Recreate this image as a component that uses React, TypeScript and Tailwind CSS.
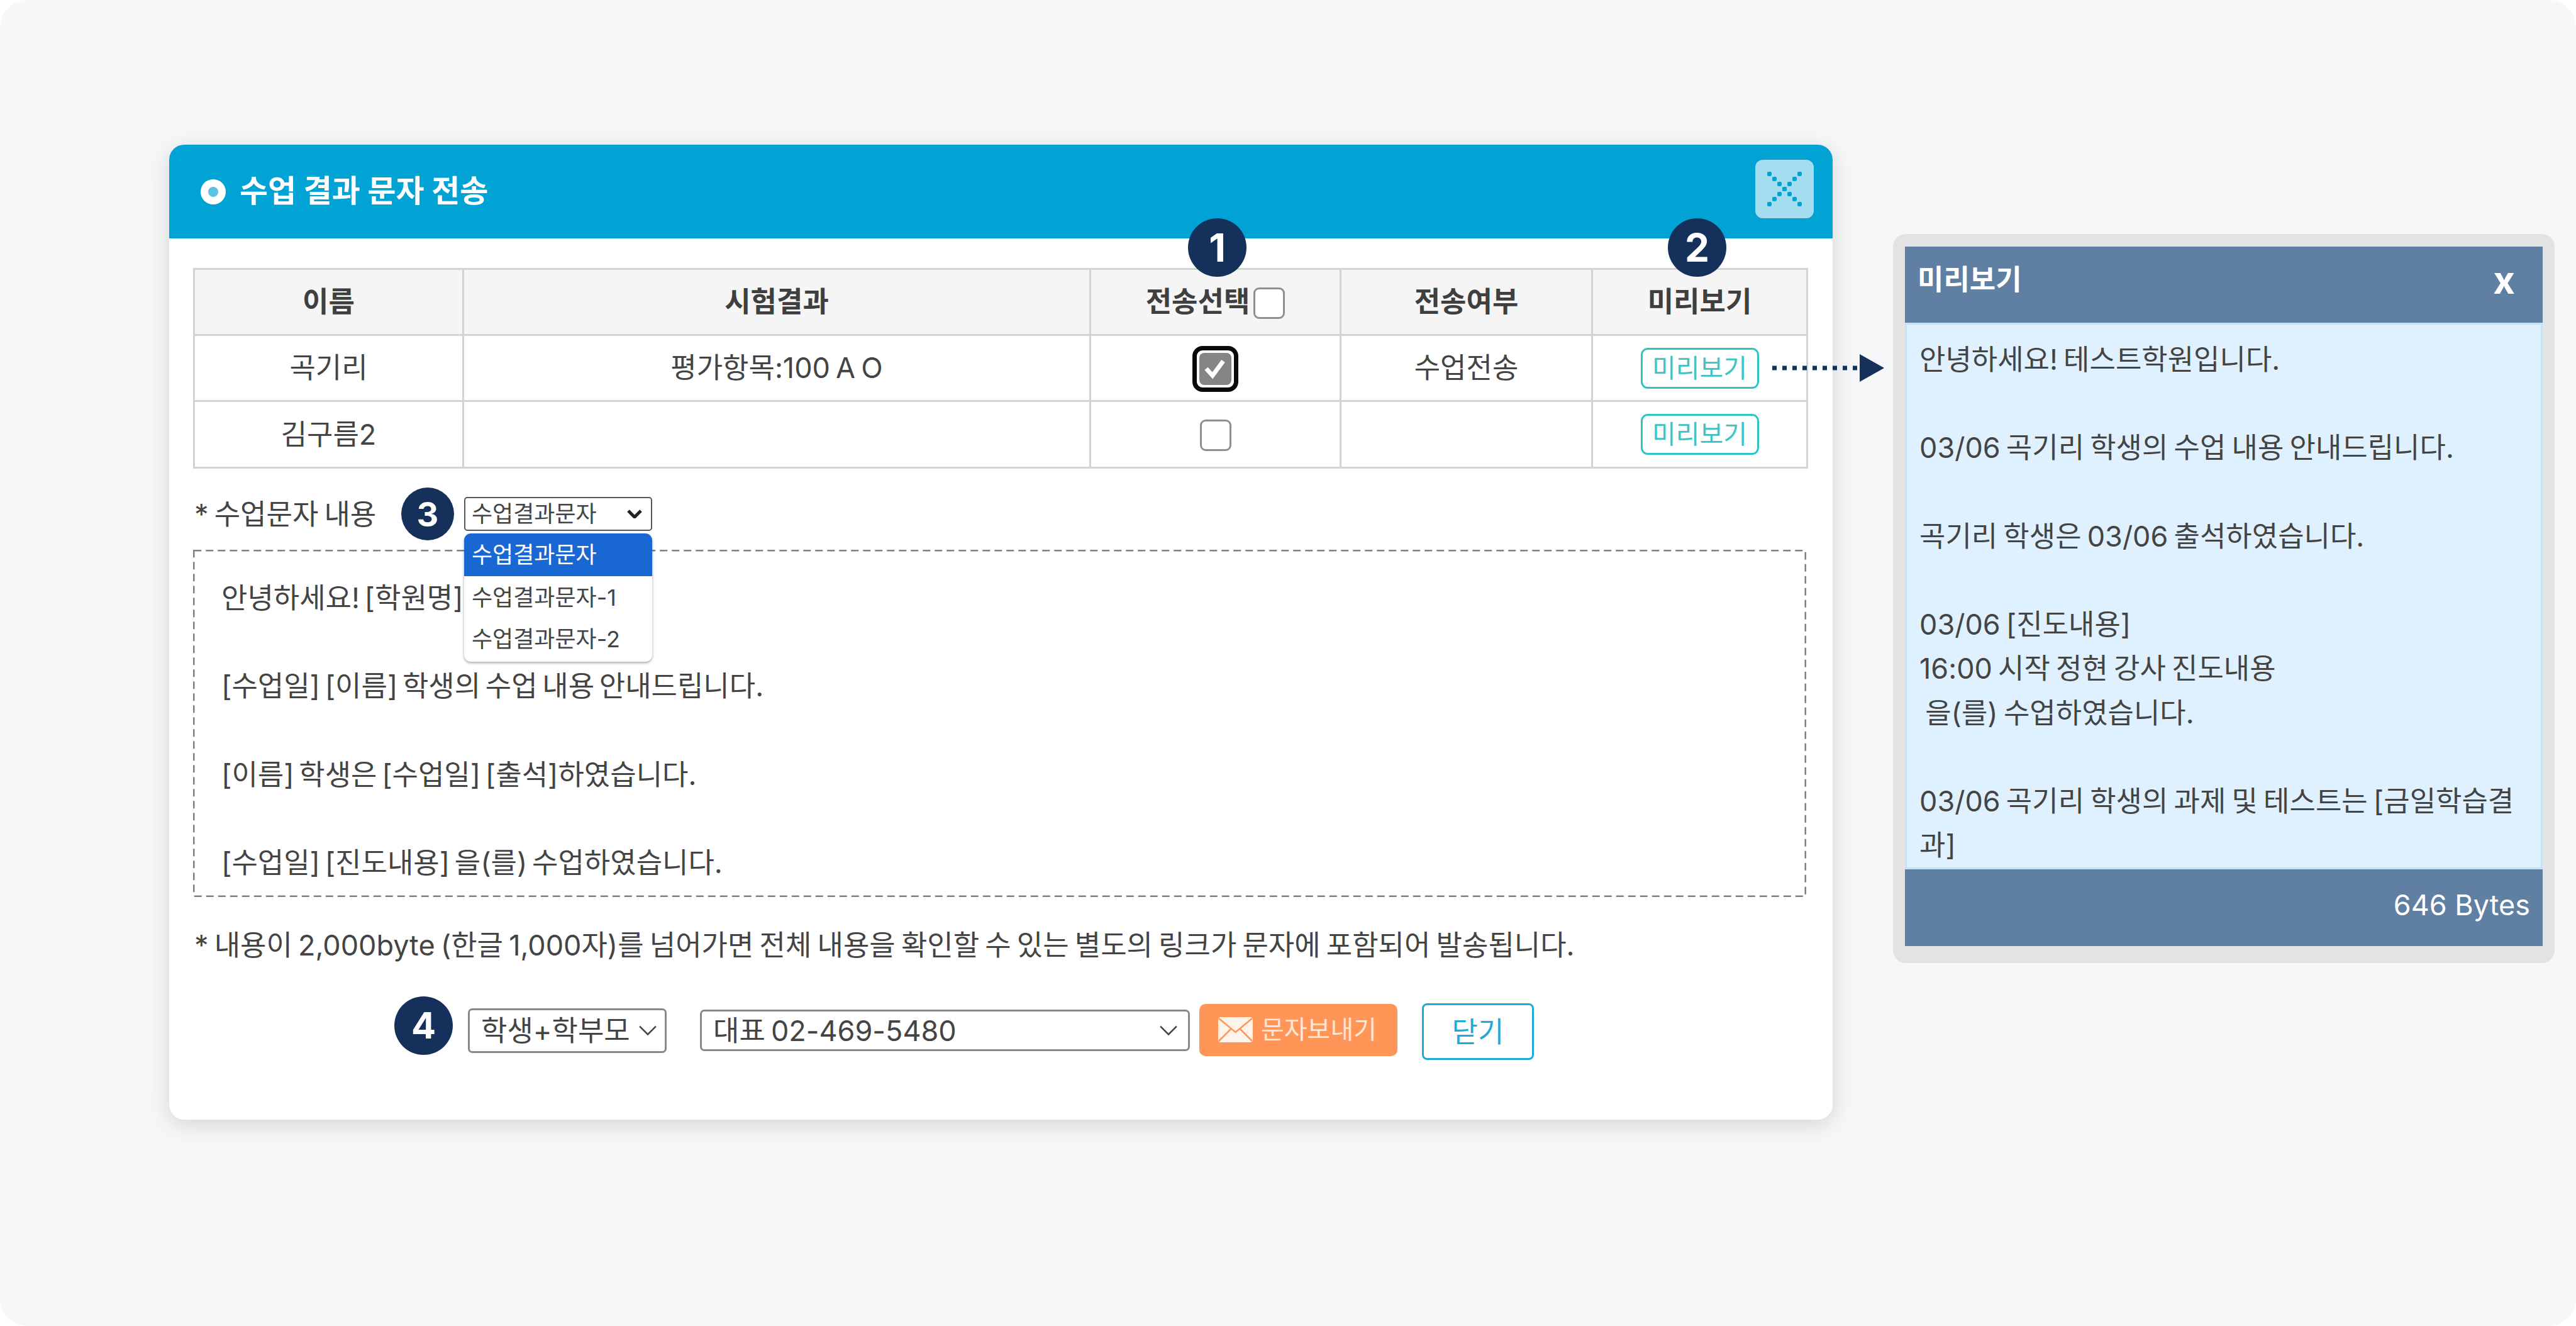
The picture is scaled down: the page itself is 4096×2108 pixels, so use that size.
import React from "react";

const FONT = "[font-family:Inter,'Noto_Sans_CJK_KR','Noto_Sans',sans-serif] [word-spacing:-3.5px]";

function Badge({ n, className = "" }: { n: string; className?: string }) {
  return (
    <div className={`flex items-center justify-center rounded-full bg-[#15305a] text-white font-bold shrink-0 ${className}`}>
      {n}
    </div>
  );
}

function Chevron({ className = "", sw = 2 }: { className?: string; sw?: number }) {
  return (
    <svg viewBox="0 0 24 14" className={className} fill="none" stroke="currentColor" strokeWidth={sw}>
      <path d="M2 2 L12 12 L22 2" />
    </svg>
  );
}

function CloseDotted() {
  const pts = [-3, -2, -1, 0, 1, 2, 3];
  return (
    <svg viewBox="0 0 93 93" className="w-[93px] h-[93px]">
      {pts.map((p) => (
        <g key={p} fill="#00a3d4">
          <rect x={46.5 + p * 8 - 3.5} y={46.5 + p * 8 - 3.5} width="7" height="7" rx="2" />
          <rect x={46.5 - p * 8 - 3.5} y={46.5 + p * 8 - 3.5} width="7" height="7" rx="2" />
        </g>
      ))}
    </svg>
  );
}

function PreviewBtn() {
  return (
    <div className="mx-auto flex items-center justify-center w-[188px] h-[65px] rounded-[11px] border-[3px] border-[#2cc5c5] bg-white text-[#3fc4c4] text-[41px] leading-none">
      미리보기
    </div>
  );
}

function UncheckedBox({ className = "" }: { className?: string }) {
  return <div className={`w-[50px] h-[50px] rounded-[9px] border-[3px] border-[#8f8f8f] bg-white ${className}`} />;
}

function CheckedBox() {
  return (
    <div className="mx-auto mt-[3px] flex items-center justify-center w-[73px] h-[73px] rounded-[16px] border-[7px] border-[#0a0a0a] bg-white">
      <div className="flex items-center justify-center w-[51px] h-[51px] rounded-[8px] bg-[#858585]">
        <svg viewBox="0 0 51 51" className="w-[51px] h-[51px]" fill="none" stroke="#fff" strokeWidth="7">
          <path d="M11 25 L21 36 L38 13" />
        </svg>
      </div>
    </div>
  );
}

const th = "border-[3px] border-[#d3d3d3] bg-[#f5f5f5] font-bold text-[#3f3f3f] text-[45px] text-center p-0";
const td = "border-[3px] border-[#d3d3d3] text-[#444] text-[45px] text-center p-0";

const templateLines = [
  "안녕하세요! [학원명]입니다.",
  "",
  "[수업일] [이름] 학생의 수업 내용 안내드립니다.",
  "",
  "[이름] 학생은 [수업일] [출석]하였습니다.",
  "",
  "[수업일] [진도내용] 을(를) 수업하였습니다.",
];

const previewLines = [
  "안녕하세요! 테스트학원입니다.",
  "",
  "03/06 곡기리 학생의 수업 내용 안내드립니다.",
  "",
  "곡기리 학생은 03/06 출석하였습니다.",
  "",
  "03/06 [진도내용]",
  "16:00 시작 정현 강사 진도내용",
  " 을(를) 수업하였습니다.",
  "",
  "03/06 곡기리 학생의 과제 및 테스트는 [금일학습결과]",
];

export default function App() {
  return (
    <div className={`relative w-[4096px] h-[2108px] bg-white overflow-hidden ${FONT}`}>
      <div className="flex items-start w-full h-full pl-[269px] pt-[230px] gap-[96px] rounded-[44px] bg-[#f6f7f9]">
        {/* Modal */}
        <div className="relative w-[2645px] h-[1550px] shrink-0 rounded-[24px] bg-white shadow-[0_8px_36px_rgba(0,0,0,0.14)]">
          <div className="flex items-center justify-between h-[149px] rounded-t-[24px] bg-[#00a3d4] pl-[50px] pr-[30px]">
            <div className="flex items-center gap-[22px]">
              <div className="flex items-center justify-center w-[40px] h-[40px] rounded-full bg-white">
                <div className="w-[16px] h-[16px] rounded-full bg-[#5cc2e2]" />
              </div>
              <span className="text-white font-bold text-[49px] leading-none -mt-[3px] [word-spacing:0px]">수업 결과 문자 전송</span>
            </div>
            <div className="flex items-center justify-center w-[93px] h-[93px] -mt-[9px] rounded-[12px] bg-[#a6dcef]">
              <CloseDotted />
            </div>
          </div>

          <div className="pl-[38px] pr-[40px] pt-[47px]">
            <table className="table-fixed border-collapse w-[2565px] h-[316px]">
              <colgroup>
                <col className="w-[428px]" />
                <col className="w-[997px]" />
                <col className="w-[398px]" />
                <col className="w-[400px]" />
                <col className="w-[342px]" />
              </colgroup>
              <thead>
                <tr className="h-[105px]">
                  <th className={th}>이름</th>
                  <th className={th}>시험결과</th>
                  <th className={th}>
                    <div className="flex items-center justify-center gap-[6px]">
                      <span>전송선택</span>
                      <UncheckedBox className="mt-[4px]" />
                    </div>
                  </th>
                  <th className={th}>전송여부</th>
                  <th className={th}>미리보기</th>
                </tr>
              </thead>
              <tbody>
                <tr className="h-[105px]">
                  <td className={td}>곡기리</td>
                  <td className={td}>평가항목:100 A O</td>
                  <td className={td}><CheckedBox /></td>
                  <td className={td}>수업전송</td>
                  <td className={td}><PreviewBtn /></td>
                </tr>
                <tr className="h-[106px]">
                  <td className={td}>김구름2</td>
                  <td className={td} />
                  <td className={td}><UncheckedBox className="mx-auto mt-[3px]" /></td>
                  <td className={td} />
                  <td className={td}><PreviewBtn /></td>
                </tr>
              </tbody>
            </table>

            {/* Template row */}
            <div className="flex items-center h-[54px] mt-[45px]">
              <span className="text-[#444] text-[45px] leading-none w-[331px] shrink-0 pl-[2px]">* 수업문자 내용</span>
              <Badge n="3" className="w-[84px] h-[84px] text-[54px]" />
              <div className="relative ml-[16px]">
                <div className="flex items-center justify-between w-[299px] h-[54px] rounded-[5px] border-[2px] border-[#555] bg-white pl-[10px] pr-[14px] text-[#444] text-[36px] leading-none">
                  <span>수업결과문자</span>
                  <Chevron className="w-[24px] h-[14px] text-[#222]" sw={5} />
                </div>
                <div className="absolute left-0 top-[58px] z-10 w-[299px] h-[204px] overflow-hidden rounded-[11px] bg-white shadow-[0_2px_4px_rgba(0,0,0,0.35)] text-[36px] leading-none">
                  <div className="flex items-center h-[68px] pl-[12px] bg-[#1967d2] text-white">수업결과문자</div>
                  <div className="flex items-center h-[68px] pl-[12px] text-[#444]">수업결과문자-1</div>
                  <div className="flex items-center h-[64px] pl-[12px] text-[#444]">수업결과문자-2</div>
                </div>
              </div>
            </div>

            {/* Template text */}
            <div className="relative mt-[30px] h-[552px] w-[2565px] pl-[45px] pr-[40px] pt-[42px] overflow-hidden text-[#444] text-[45px] leading-[70.2px] [word-spacing:-5px]">
              <svg className="absolute inset-0 w-full h-full" fill="none">
                <rect x="1.25" y="1.25" width="2562.5" height="549.5" stroke="#808080" strokeWidth="2.5" strokeDasharray="12 7" />
              </svg>
              {templateLines.map((l, i) => (
                <div key={i} className="relative h-[70.2px]">{l}</div>
              ))}
            </div>

            <p className="mt-[52px] pl-[2px] text-[#444] text-[45px] leading-[50px] whitespace-nowrap">
              * 내용이 2,000byte (한글 1,000자)를 넘어가면 전체 내용을 확인할 수 있는 별도의 링크가 문자에 포함되어 발송됩니다.
            </p>

            {/* Bottom controls */}
            <div className="flex items-center h-[90px] mt-[67px] pl-[320px]">
              <Badge n="4" className="w-[93px] h-[93px] text-[58px] -mt-[20px]" />
              <div className="flex items-center justify-between w-[316px] h-[71px] ml-[24px] rounded-[7px] border-[3px] border-[#888] bg-white pl-[18px] pr-[10px] text-[#444] text-[45px] leading-none -mt-[4px]">
                <span>학생+학부모</span>
                <Chevron className="w-[34px] h-[18px] text-[#444]" />
              </div>
              <div className="flex items-center justify-between w-[779px] h-[66px] ml-[53px] rounded-[7px] border-[3px] border-[#888] bg-white pl-[18px] pr-[14px] text-[#444] text-[45px] leading-none -mt-[4px]">
                <span>대표 02-469-5480</span>
                <Chevron className="w-[34px] h-[18px] text-[#444]" />
              </div>
              <div className="flex items-center w-[315px] h-[83px] ml-[15px] pl-[30px] rounded-[10px] bg-[#ff9557] text-[#ffe7d8] text-[40px] leading-none gap-[13px] -mt-[6px]">
                <svg viewBox="0 0 55 40" className="w-[55px] h-[40px] shrink-0">
                  <rect x="0" y="0" width="55" height="40" rx="4" fill="#fff4ec" />
                  <path d="M1 2 L27.5 24 L54 2 M1 38 L20 19 M54 38 L35 19" fill="none" stroke="#ff9557" strokeWidth="2.5" />
                </svg>
                <span>문자보내기</span>
              </div>
              <div className="flex items-center justify-center w-[178px] h-[90px] ml-[39px] rounded-[8px] border-[3px] border-[#1fabd8] bg-white text-[#1fabd8] text-[45px] leading-none">
                닫기
              </div>
            </div>
          </div>

          <Badge n="1" className="absolute left-[1620px] top-[117px] w-[93px] h-[93px] text-[62px]" />
          <Badge n="2" className="absolute left-[2383px] top-[117px] w-[93px] h-[93px] text-[62px]" />
        </div>

        {/* Preview panel */}
        <div className="w-[1052px] h-[1159px] mt-[142px] shrink-0 rounded-[20px] bg-[#e3e3e3] pt-[20px] px-[19px]">
          <div className="flex items-center justify-between h-[121px] bg-[#5f7fa3] pl-[20px] pr-[44px] text-white font-bold pb-[16px]">
            <span className="text-[45px] leading-none">미리보기</span>
            <span className="text-[60px] leading-none">x</span>
          </div>
          <div className="h-[869px] overflow-hidden bg-[#dff0ff] border-[3px] border-[#c5e1f2] pt-[21px] pl-[20px] pr-[16px] text-[#444] text-[45px] leading-[70.2px] whitespace-pre-wrap">
            {previewLines.map((l, i) => (
              <div key={i} className="min-h-[70.2px]">{l}</div>
            ))}
          </div>
          <div className="flex items-center justify-end h-[122px] bg-[#5f7fa3] pr-[20px] pb-[10px] text-white text-[45px] leading-none [word-spacing:0px]">
            646 Bytes
          </div>
        </div>
      </div>

      {/* Connector arrow */}
      <svg viewBox="0 0 180 46" className="absolute left-[2816px] top-[562px] w-[180px] h-[46px]">
        <path d="M2 23 H138" stroke="#15305a" strokeWidth="7" strokeDasharray="7 9" fill="none" />
        <path d="M141 1 L180 23 L141 45 Z" fill="#15305a" />
      </svg>
    </div>
  );
}
